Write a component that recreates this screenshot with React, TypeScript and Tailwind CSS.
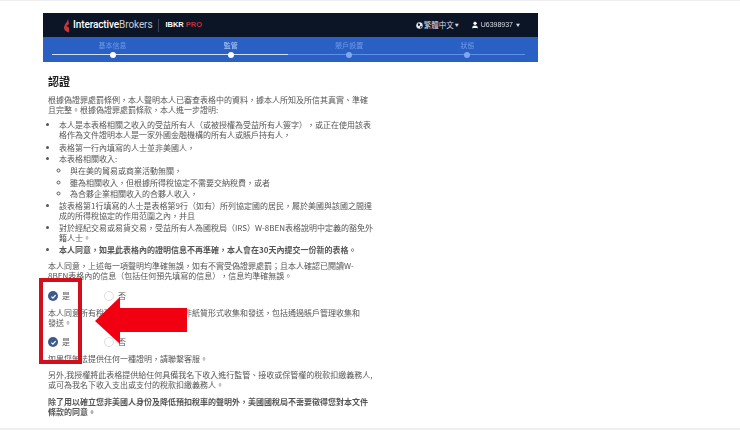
import React from "react";
import { User } from "lucide-react";

const font = { fontFamily: '"Noto Sans CJK TC","Liberation Sans",sans-serif' };
const latin = { fontFamily: '"Liberation Sans",sans-serif' };

function Step({ label, tone, dot }: { label: string; tone: string; dot: string }) {
  return (
    <div className="flex flex-col items-center w-[118.3px]">
      <span className={`text-[7px] leading-[10px] ${tone}`}>{label}</span>
      <span className={`mt-[2px] w-[6px] h-[6px] rounded-full ${dot}`} />
    </div>
  );
}

function Radios({ className }: { className: string }) {
  return (
    <div className={`flex items-center ${className}`}>
      <div className="flex items-center w-[56px] gap-[4px]">
        <span className="w-[10px] h-[10px] rounded-full bg-[#3f5a8a] flex items-center justify-center">
          <svg width="7" height="7" viewBox="0 0 10 10"><path d="M2 5.2 4.2 7.4 8 3" fill="none" stroke="#fff" strokeWidth="1.8" /></svg>
        </span>
        <span className="text-[8px] leading-[10px] text-[#555]">是</span>
      </div>
      <div className="flex items-center gap-[4px]">
        <span className="w-[10px] h-[10px] rounded-full border border-[#ddd] bg-white" />
        <span className="text-[8px] leading-[10px] text-[#555]">否</span>
      </div>
    </div>
  );
}

export default function App() {
  return (
    <div className="relative w-[740px] h-[430px] overflow-hidden bg-white" style={font}>
      <div className="blur-[0.4px]">
        <div className="h-[1px] bg-[#eeeeee]" />
        <div className="ml-[43px] mt-[12px] w-[495px]">
          <div className="h-[24px] bg-[#0c1526] flex items-center justify-between pl-[20px] pr-[18px]">
            <div className="flex items-center">
              <svg width="8" height="15" viewBox="0 0 8 14" className="mr-[2px]"><path d="M5 0 C5 3 1 6 1 9 C1 12 3 13 6 14 L6 9 L3.5 7.5 L6 5.5 Z" fill="#c8343c" /></svg>
              <span className="text-[10px] leading-[14px] font-medium text-white tracking-[-0.1px]" style={{ fontFamily: 'Roboto,sans-serif' }}>Interactive</span>
              <span className="text-[10px] leading-[14px] text-[#c8ccd6] tracking-[-0.1px]" style={{ fontFamily: 'Roboto,sans-serif' }}>Brokers</span>
              <span className="w-[1px] h-[13px] bg-[#3a4355] ml-[6px] mr-[6px]" />
              <span className="text-[7.5px] font-bold text-white" style={latin}>IBKR</span>
              <span className="ml-[2px] text-[7.5px] font-bold text-[#b8323c]" style={latin}>PRO</span>
            </div>
            <div className="flex items-center text-[7.5px] text-[#d8dce4]">
              <svg width="7" height="7" viewBox="0 0 10 10" className="mr-[1px]">
                <circle cx="5" cy="5" r="4.6" fill="#e4e7ec" />
                <path d="M2.5 1.8 6 3 5 5.6 3 5.2Z M6 6 8.6 5.6 7 8.8 5.8 8Z" fill="#0c1526" />
              </svg>
              <span>繁體中文</span>
              <span className="ml-[1px] text-[4px]">▼</span>
              <User size={8} className="ml-[12px] mr-[2px] text-white" fill="#fff" />
              <span className="text-[7px]" style={latin}>U6398937</span>
              <span className="ml-[3px] text-[4px]">▼</span>
            </div>
          </div>
          <div className="relative h-[25px] bg-[#2a5fc4] flex justify-center pt-[3px]">
            <div className="absolute left-[9px] right-[13px] top-[17px] h-[1px] bg-[#5f8fe6]" />
            <div className="absolute left-[9px] top-[17px] w-[236px] h-[1px] bg-[#cfe0fb]" />
            <div className="relative flex mr-[1px]">
              <Step label="基本信息" tone="text-[#6f9ae6]" dot="bg-white" />
              <Step label="監管" tone="text-[#b8cdf2]" dot="bg-white" />
              <Step label="賬戶設置" tone="text-[#6f9ae6]" dot="bg-[#7fa8ee]" />
              <Step label="狀態" tone="text-[#6f9ae6]" dot="bg-[#7fa8ee]" />
            </div>
          </div>
        </div>

        <div className="ml-[48px] w-[340px] text-[8px] leading-[10px] text-[#555]">
          <h1 className="mt-[12px] text-[11px] leading-[14px] font-bold text-[#222]">認證</h1>
          <p className="mt-[7px]">根據偽證罪處罰條例，本人聲明本人已審查表格中的資料，據本人所知及所信其真實、準確<br />且完整。根據偽證罪處罰條款，本人進一步證明:</p>
          <ul className="mt-[5px] list-disc pl-[11px]">
            <li>本人是本表格相關之收入的受益所有人（或被授權為受益所有人簽字），或正在使用該表<br />格作為文件證明本人是一家外國金融機構的所有人或賬戶持有人，</li>
            <li className="mt-[3px]">表格第一行內填寫的人士並非美國人，</li>
            <li className="mt-[1px]">本表格相關收入:
              <ul className="list-[circle] pl-[11px]">
                <li className="mt-[2px]">與在美的貿易或商業活動無關，</li>
                <li className="mt-[2px]">雖為相關收入，但根據所得稅協定不需要交納稅費，或者</li>
                <li className="mt-[1px]">為合夥企業相關收入的合夥人收入，</li>
              </ul>
            </li>
            <li className="mt-[2px]">該表格第1行填寫的人士是表格第9行（如有）所列協定國的居民，屬於美國與該國之間達<br />成的所得稅協定的作用范圍之內，并且</li>
            <li className="mt-[2px]">對於經紀交易或易貨交易，受益所有人為國稅局（IRS）W-8BEN表格說明中定義的豁免外<br />籍人士。</li>
            <li className="mt-[2px] font-bold">本人同意，如果此表格內的證明信息不再準確，本人會在30天內提交一份新的表格。</li>
          </ul>
          <p className="mt-[6px]">本人同意，上述每一項聲明均準確無誤，如有不實受偽證罪處罰；且本人確認已閱讀W-<br />8BEN表格內的信息（包括任何預先填寫的信息），信息均準確無誤。</p>
          <Radios className="mt-[10px]" />
          <p className="mt-[7px]">本人同意所有稅務表格將以電子形式而非紙質形式收集和發送，包括通過賬戶管理收集和<br />發送。</p>
          <Radios className="mt-[9px]" />
          <p className="mt-[7px]">如果您無法提供任何一種證明，請聯繫客服。</p>
          <p className="mt-[6px]">另外,我授權將此表格提供給任何具備我名下收入進行監管、接收或保管權的稅款扣繳義務人,<br />或可為我名下收入支出或支付的稅款扣繳義務人。</p>
          <p className="mt-[7px] font-bold">除了用以確立您非美國人身份及降低預扣稅率的聲明外，美國國稅局不需要徵得您對本文件<br />條款的同意。</p>
        </div>
      </div>

      <div className="absolute left-0 right-0 bottom-0 h-[2px] bg-[#eeeeee]" />
      <div className="absolute left-[39px] top-[278px] w-[43px] h-[86px] border-[4px] border-[#d0101c]" />
      <svg className="absolute left-[95px] top-[297px]" width="92" height="47" viewBox="0 0 92 47">
        <path d="M0 24 L25 0 L25 11 L92 11 L92 35 L25 35 L25 47 Z" fill="#f00010" />
      </svg>
    </div>
  );
}
